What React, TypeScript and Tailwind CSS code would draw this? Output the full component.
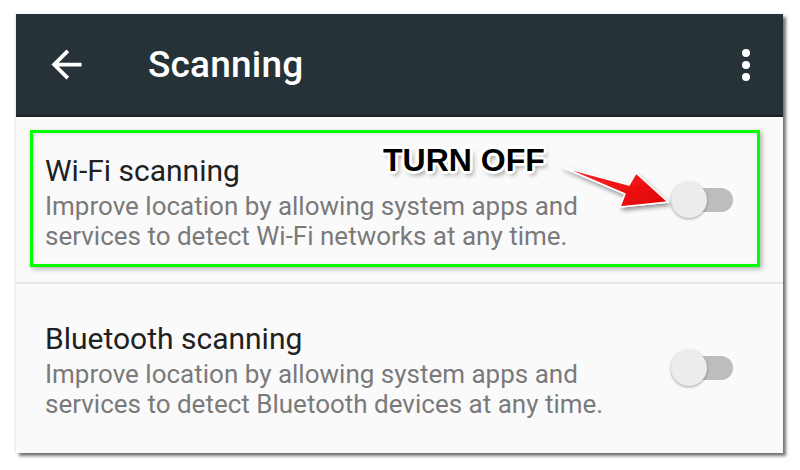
import React from 'react';

const Toggle: React.FC = () => (
  <div className="relative w-[62px] h-[38px] shrink-0">
    <span className="absolute right-0 top-[7px] w-[52px] h-[24px] rounded-full bg-[#bdbdbd]"></span>
    <span className="absolute left-0 top-[1px] w-[36px] h-[36px] rounded-full bg-[#ececec] shadow-[0_1px_3px_rgba(0,0,0,0.35)]"></span>
  </div>
);

const SettingRow: React.FC<{ title: string; desc: string[]; children?: React.ReactNode; divider?: boolean }> = ({ title, desc, children, divider }) => (
  <div className={`relative flex items-center justify-between pl-[29px] pr-[50px] h-[167px] ${divider ? 'border-b-2 border-[#e6e6e6]' : ''}`}>
    <div className="flex flex-col pt-[4px]">
      <p className="text-[30px] leading-[36px] text-[#212121]">{title}</p>
      <div className="mt-[2px] text-[26px] leading-[30px] text-[#7a7a7a]">
        {desc.map((line) => (
          <p key={line}>{line}</p>
        ))}
      </div>
    </div>
    <Toggle />
    {children}
  </div>
);

const App: React.FC = () => {
  return (
    <div className="relative w-[800px] h-[470px] bg-white font-['Roboto',sans-serif] overflow-hidden">
      <div className="absolute left-[16px] top-[14px] w-[767px] h-[439px] bg-[#fafafa] shadow-[3px_3px_3px_rgba(0,0,0,0.55),-1px_0_2px_rgba(0,0,0,0.1)] flex flex-col">
        <header className="flex items-center h-[103px] bg-[#263238] pl-[28px] pr-[33px] border-b-2 border-[#1b2327] shrink-0">
          <svg width="45" height="45" viewBox="0 0 24 24" className="shrink-0">
            <path fill="#fff" d="M20 11H7.83l5.59-5.59L12 4l-8 8 8 8 1.41-1.41L7.83 13H20v-2z" />
          </svg>
          <h1 className="ml-[59px] text-[37px] font-medium text-white tracking-[0.2px]">Scanning</h1>
          <div className="ml-auto flex flex-col gap-[4px]">
            <span className="w-[8px] h-[8px] rounded-full bg-white"></span>
            <span className="w-[8px] h-[8px] rounded-full bg-white"></span>
            <span className="w-[8px] h-[8px] rounded-full bg-white"></span>
          </div>
        </header>

        <SettingRow
          title="Wi-Fi scanning"
          desc={['Improve location by allowing system apps and', 'services to detect Wi-Fi networks at any time.']}
          divider
        >
          {/* green highlight box */}
          <div className="absolute left-[14px] top-[13px] right-[23px] bottom-[15px] border-[3px] border-[#00ff00] shadow-[2px_2px_5px_rgba(0,0,0,0.3),inset_1px_1px_4px_rgba(0,0,0,0.12)] pointer-events-none"></div>
        </SettingRow>

        <SettingRow
          title="Bluetooth scanning"
          desc={['Improve location by allowing system apps and', 'services to detect Bluetooth devices at any time.']}
        />
      </div>

      {/* annotation */}
      <p className="absolute left-[383px] top-[140px] font-['Liberation_Sans',Arial,sans-serif] font-bold text-[32px] leading-[40px] text-black [text-shadow:-2px_-2px_0_#fff,2px_-2px_0_#fff,-2px_2px_0_#fff,2px_2px_0_#fff,0_-3px_0_#fff,0_3px_0_#fff,-3px_0_0_#fff,3px_0_0_#fff,3px_4px_5px_rgba(0,0,0,0.45)]">
        TURN OFF
      </p>
      <svg className="absolute left-[540px] top-[150px]" width="140" height="70" viewBox="0 0 140 70">
        <defs>
          <linearGradient id="ar" x1="0" y1="0" x2="1" y2="1">
            <stop offset="0" stopColor="#ff2a2a" />
            <stop offset="1" stopColor="#e00000" />
          </linearGradient>
          <filter id="sh" x="-20%" y="-20%" width="140%" height="160%">
            <feDropShadow dx="2" dy="3" stdDeviation="2" floodColor="#000" floodOpacity="0.4" />
          </filter>
        </defs>
        <polygon
          points="22,17 89,35 96,23 128,52 80,57 85,44"
          fill="url(#ar)"
          stroke="#fff"
          strokeWidth="1.5"
          strokeLinejoin="round"
          filter="url(#sh)"
        />
      </svg>
    </div>
  );
};

export default App;
